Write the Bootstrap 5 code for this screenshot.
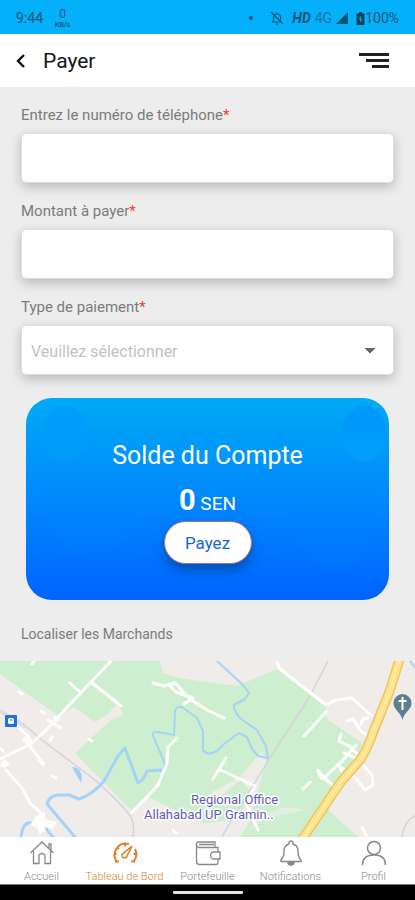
<!DOCTYPE html>
<html lang="fr">
<head>
<meta charset="utf-8">
<meta name="viewport" content="width=device-width, initial-scale=1">
<title>Payer</title>
<link href="https://cdn.jsdelivr.net/npm/bootstrap@5.3.0/dist/css/bootstrap.min.css" rel="stylesheet">
<style>
body{font-family:Roboto,"Liberation Sans",sans-serif;background:#ededed;color:#7b7b7b}
svg{display:block}
.status{background:#03b0f9;color:#075374;height:34px;font-size:14px;padding:2px 16px 0;line-height:16px}
.speed{font-size:12px;line-height:14px}
.speed small{font-size:7px;line-height:9px;font-weight:500}
.topbar{height:53px;padding:0 24px 0 14px}
.topbar h1{font-size:21px;line-height:28px;color:#161616;font-weight:400}
.payform{padding:18px 21px 0}
.payform label,.locate{font-size:15px;line-height:20px;font-weight:400}
.payform label{margin-bottom:8px}
.req{color:#f33}
.field{height:50px;border:1px solid #dedede;border-radius:5px;box-shadow:0 4px 12px rgba(0,0,0,.22);margin-bottom:18px}
.form-select.field{font-size:16px;color:#c2c2c2;padding:8px 36px 4px 9px;background-image:linear-gradient(to bottom right,#666 50%,transparent 51%),linear-gradient(to bottom left,#666 50%,transparent 51%);background-size:5px 5px;background-position:right 18px center,right 23px center;margin-bottom:23px}
.balance{margin:0 5px;border-radius:26px;background:linear-gradient(#00aaf5,#008ffb 40%,#0064ff);color:#fff;padding:40px 0 36px;overflow:hidden}
.balance h2{font-size:25px;line-height:36px;font-weight:400}
.amount{font-size:19px;line-height:34px;margin-top:9px}
.amount strong{font-size:29px;font-weight:700}
.orb{position:absolute;border-radius:50%;background:linear-gradient(#0096fb,#00a0fa)}
.orb-a{width:46px;height:55px;left:16px;top:8px;opacity:.6}
.orb-b{width:46px;height:55px;right:2px;top:8px}
.orb-c{width:82px;height:84px;right:14px;top:86px;opacity:.06}
.orb-d{width:82px;height:84px;left:24px;top:76px;opacity:.06}
.btn-payez{background:#fff;color:#1763dc;border:1px solid #a66f91;border-radius:22px;height:43px;width:88px;font-size:17px;line-height:24px;padding:0;box-shadow:0 6px 12px rgba(0,0,0,.3)}
.btn-payez:hover{background:#f4f7ff;color:#1763dc}
.locate{font-size:14px;padding:24px 21px 17px}
.mapbox{height:176px}
.tabs a{color:#888;font-size:11px;font-weight:300;line-height:12px;padding:3px 0 1px}
.tabs a.current{color:#d9822b}
.tabs svg{height:26px;width:28px;margin-bottom:5px}
.tabs{border-bottom:1px solid #777}
.gesture{height:15px;background:#000}
.gesture span{width:70px;height:3px;background:#e8e0e4;border-radius:1px}
</style>
<script src="https://cdn.jsdelivr.net/npm/bootstrap@5.3.0/dist/js/bootstrap.bundle.min.js"></script>
</head>
<body>
<div class="d-flex flex-column min-vh-100">
<div class="status d-flex align-items-center justify-content-between">
  <div class="d-flex align-items-center gap-2">
    <span>9:44</span>
    <span class="speed d-flex flex-column align-items-center ms-1">0<small>KB/s</small></span>
  </div>
  <div class="d-flex align-items-center">
    <svg class="me-3" width="6" height="14"><circle cx="3" cy="7" r="2" fill="#075374"/></svg>
    <svg class="me-2" width="14" height="14" viewBox="0 0 14 14" fill="none" stroke="#075374" stroke-width="1.2"><path d="M2 11h10M3.500 11V6.500a3.500 3.500 0 0 1 7 0V11M7 3V1.500M6 13h2M1 1l12 12"/></svg>
    <b class="fst-italic me-1">HD</b>
    <span style="opacity:.65">4G</span>
    <svg class="ms-1" width="12" height="12"><path d="M12 0v12H0z" fill="#075374"/></svg>
    <svg class="ms-2" width="9" height="13" viewBox="0 0 9 13"><path d="M3 0h3v1.500h2.500V13H.5V1.500H3z" fill="#064158"/><path d="M5 3.500 2.800 7.500h1.500V11l2.200-4H5z" fill="#03b0f9"/></svg>
    <span>100%</span>
  </div>
</div>
<header class="topbar bg-white d-flex align-items-center">
  <a href="#" aria-label="Retour" class="me-3"><svg width="13" height="16" viewBox="0 0 13 16" fill="none" stroke="#111" stroke-width="2.400"><path d="M10 2 4 8l6 6"/></svg></a>
  <h1 class="m-0">Payer</h1>
  <button class="btn p-0 border-0 ms-auto" aria-label="Menu"><svg width="32" height="16" viewBox="0 0 32 16" fill="#222"><path d="M0 0h30v3H0zM7 6h23v3H7zM13 12h17v3H13z"/></svg></button>
</header>
<main class="d-flex flex-column flex-grow-1">
  <form class="payform">
    <label for="tel" class="d-block">Entrez le numéro de téléphone<span class="req">*</span></label>
    <input id="tel" type="tel" class="form-control field">
    <label for="montant" class="d-block">Montant à payer<span class="req">*</span></label>
    <input id="montant" type="text" inputmode="decimal" class="form-control field">
    <label for="type" class="d-block">Type de paiement<span class="req">*</span></label>
    <select id="type" class="form-select field"><option>Veuillez sélectionner</option></select>
    <section class="balance position-relative text-center">
      <span class="orb orb-a"></span><span class="orb orb-b"></span><span class="orb orb-c"></span><span class="orb orb-d"></span>
      <div class="position-relative">
        <h2 class="m-0">Solde du Compte</h2>
        <div class="amount"><strong>0</strong> SEN</div>
        <button type="button" class="btn btn-payez">Payez</button>
      </div>
    </section>
  </form>
  <h2 class="locate m-0">Localiser les Marchands</h2>
  <div class="mapbox flex-grow-1">
    <svg width="100%" height="100%" viewBox="0 0 415 176" preserveAspectRatio="xMidYMid slice" fill="none" stroke-linejoin="round" stroke-linecap="round" role="img" aria-label="Carte des marchands">
      <path fill="#efece9" d="M0 0h415v176H0z"/>
      <path fill="#ceefcf" d="M0 0H160L163 12 180 17 207 21 237 25 277 8 326 46 327 58 362 82 355 105 330 140 329 150 358 176H240L250 160 256 135 264 108 262 90 240 118 207 135 190 147 148 136 133 151 75 92 110 60 123 54 118 42 108 53 95 61 74 46 57 54 0 13z"/>
      <path fill="#ceefcf" d="M133 151 148 136 185 154 205 162 240 158 256 120 240 114 207 132 190 125 148 130z"/>
      <path fill="#efece9" d="M262 90 266 100 256 135 240 119 222 134 207 134 240 116z"/>
      <path fill="#efece9" d="M248 172 262 158 305 149 297 147 280 147 256 158z" opacity=".7"/>
      <g stroke="#d3d3d9" stroke-width="1.500"><path d="M0 50Q22 60 38 76L95 119Q122 143 131 156 135 164 133 176M328 0 310 35 270 97 228 165 222 176M402 176Q404 160 415 155"/></g>
      <path stroke="#dcdce2" stroke-width="4" d="M0 50 25 65"/>
      <g stroke="#a5d3f7" stroke-width="2"><path stroke-width="3" d="M75 176 47 143Q49 135 58 134L69 134 79 138Q92 134 104 120L118 95 125 87 131 103 138 122Q144 119 147 110L163 109"/><path d="M163 109 165 103 154 77Q150 70 158 71L174 74 175 50Q177 45 182 46L197 57 203 70 203 90 209 93 217 90 224 83 239 72 247 76 252 88 258 95 268 97 266 85 257 69 241 58Q233 50 234 44L245 38 249 32 243 24 217 0"/><path stroke-width="3" d="M21 176Q22 164 28 162L41 162 53 176"/><path d="M410 0 415 7"/></g>
      <path fill="#9bd0f8" d="M72 106Q80 105 82 116L81 122Q77 115 72 106z"/>
      <g stroke="#fdfefd" stroke-width="3">
        <path d="M111 0 91 21 59 55 45 70 31 83 0 98M70 22 80 31M91 21 121 45M32 3 34 0M48 59 61 67M17 65 29 76 29 84 42 101M6 109 22 127 30 142 41 152 44 170M19 31 22 33M41 50 44 52M89 78 92 80M52 115 56 117M50 80 52 76M0 87 3 90"/>
        <path d="M177 77 168 86 167 102 158 124 148 135 132 151M153 22 164 25 175 22 190 38 207 49 224 57M168 23 176 31 193 37 184 43"/>
        <path d="M277 1 280 8 326 44 336 39 352 37 372 55M326 51 304 75M226 97 213 118M221 109 255 125 246 142 258 169"/>
        <path d="M303 128 310 121M318 109 324 117 335 126M325 116 343 99 356 84M347 60 353 58 361 70 370 76M361 63 363 58 368 57M341 73 339 80 351 86M344 92 358 98M351 88 362 96M353 114 365 129 373 124 372 114 363 104M362 166 366 174"/>
      </g>
      <path fill="#fff" d="M36 155 45 151 45 158 57 161 53 168 45 166 40 174 37 166 30 164zM25 75 33 80 29 85 22 80zM3 98 10 102 5 107 0 105zM54 55 60 56 59 61 53 60zM37 99 46 101 43 106zM171 167 179 172 174 173zM337 103 345 107 341 112zM316 110 328 117 321 119z"/>
      <path stroke="#efc65e" stroke-width="10" stroke-linecap="butt" d="M400-3 389 32 374 69Q368 87 360 99L340 122 301 180"/>
      <path stroke="#ffe28a" stroke-width="7" stroke-linecap="butt" d="M400-3 389 32 374 69Q368 87 360 99L340 122 301 180"/>
      <path stroke="#fff0b8" stroke-width="1.500" d="M400-3 389 32 374 69Q368 87 360 99L340 122 301 180"/>
      <rect x="5" y="54" width="12" height="12" rx="1" fill="#1d70e0"/><rect x="8" y="57" width="6" height="6" rx="1.500" fill="#fff"/><path stroke="#1d70e0" stroke-width="1" d="M10 59h2"/>
      <path fill="#5f7e8b" d="M402.500 59C401 51 393.500 49 393.500 42a9 9 0 0 1 18 0C411.500 49 404 51 402.500 59z"/>
      <path stroke="#fff" stroke-width="2" stroke-linecap="butt" d="M402.500 36v13M398.500 40h8"/>
      <g fill="#615bb5" stroke="#fff" stroke-width="3" paint-order="stroke" font-family="Roboto,sans-serif" font-size="13"><text x="191" y="143">Regional Office</text><text x="144" y="158">Allahabad UP Gramin..</text></g>
    </svg>
  </div>
</main>
<nav class="tabs row g-0 row-cols-5 bg-white text-center">
  <a href="#" class="col text-decoration-none"><svg class="mx-auto" viewBox="0 0 28 26" fill="none" stroke="currentColor" stroke-width="1.300"><path d="M2.500 13 14 2l11.500 11M5.500 11v12.500H11V15q3-3 6 0v8.500h5.500V11M21 8V4h2v6"/></svg>Accueil</a>
  <a href="#" class="col text-decoration-none current" aria-current="page"><svg class="mx-auto" viewBox="0 0 28 26" fill="none" stroke="currentColor" stroke-width="2"><path d="M5.500 21.500A11.500 11.500 0 0 1 18 4M24 9a11.500 11.500 0 0 1-1.500 12.500M4 21.500h4M24 21.500h-4M2.500 14h3M6 7l2 2M14 3.500v3M25.500 14h-3"/><path d="m21 6-5.500 11a2.500 2.500 0 1 1-3.500-3.500z" stroke-width="1.600"/></svg>Tableau de Bord</a>
  <a href="#" class="col text-decoration-none"><svg class="mx-auto" viewBox="0 0 28 26" fill="none" stroke="currentColor" stroke-width="1.300"><path d="M24 12V7.500H4.500q-2-1-2-3.500v17.500q0 3 3 3H22q2 0 2-2V19M2.500 4q0-2 2-2H21v5M5 4.500h15M26 12h-6a3.500 3.500 0 0 0 0 7h6z"/></svg>Portefeuille</a>
  <a href="#" class="col text-decoration-none"><svg class="mx-auto" viewBox="0 0 28 26" fill="none" stroke="currentColor" stroke-width="1.400"><path d="M12 4V3a2 2 0 0 1 4 0v1q5 1.500 5 7 0 6 3 9v1.500H4V20q3-3 3-9 0-5.500 5-7z"/><path d="M11 22.500a3 2.500 0 0 0 6 0z" fill="currentColor"/></svg>Notifications</a>
  <a href="#" class="col text-decoration-none"><svg class="mx-auto" viewBox="0 0 28 26" fill="none" stroke="currentColor" stroke-width="1.500"><circle cx="14" cy="8" r="6.500"/><path d="M2.500 25q0-10 11.500-10t11.500 10"/></svg>Profil</a>
</nav>
<div class="gesture d-flex align-items-center justify-content-center"><span></span></div>
</div>
</body>
</html>
